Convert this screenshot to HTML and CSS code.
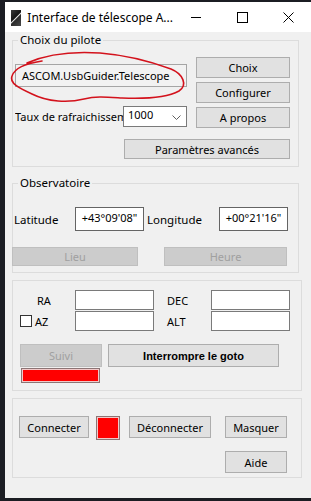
FILE: index.html
```html
<!DOCTYPE html>
<html lang="fr">
<head>
    <meta charset="UTF-8">
    <title>Interface de télescope ASCOM</title>
    <link rel="stylesheet" href="styles.css">
</head>
<body>
    <div class="window">
        <div class="titlebar">
            <span class="app-icon"></span>
            <span class="title">Interface de télescope A...</span>
            <div class="caption-btns">
                <span class="caption-btn">
                    <svg width="11" height="11" viewBox="0 0 11 11"><path d="M0 5.5h10" stroke="#000" stroke-width="1"/></svg>
                </span>
                <span class="caption-btn">
                    <svg width="11" height="11" viewBox="0 0 11 11"><rect x="0.5" y="0.5" width="10" height="10" fill="none" stroke="#000" stroke-width="1"/></svg>
                </span>
                <span class="caption-btn">
                    <svg width="11" height="11" viewBox="0 0 11 11"><path d="M0.5 0.5l10 10M10.5 0.5l-10 10" stroke="#000" stroke-width="1"/></svg>
                </span>
            </div>
        </div>

        <div class="client">
            <fieldset class="group group-pilot">
                <legend>Choix du pilote</legend>
                <div class="pilot-grid">
                    <div class="pilot-left">
                        <div class="driver-field">ASCOM.UsbGuider.Telescope</div>
                        <div class="rate-row">
                            <span class="rate-label">Taux de rafraichissement</span>
                            <div class="combo">
                                <span>1000</span>
                                <svg width="9" height="5" viewBox="0 0 9 5"><path d="M0.5 0.5l4 4 4-4" fill="none" stroke="#606060" stroke-width="1"/></svg>
                            </div>
                        </div>
                    </div>
                    <div class="pilot-right">
                        <button class="btn">Choix</button>
                        <button class="btn">Configurer</button>
                        <button class="btn">A propos</button>
                    </div>
                </div>
                <button class="btn btn-advanced">Paramètres avancés</button>
            </fieldset>

            <fieldset class="group group-obs">
                <legend>Observatoire</legend>
                <div class="obs-row">
                    <span class="obs-label obs-label-lat">Latitude</span>
                    <div class="obs-field">+43°09'08"</div>
                    <span class="obs-label obs-label-lon">Longitude</span>
                    <div class="obs-field">+00°21'16"</div>
                </div>
                <div class="obs-btns">
                    <button class="btn btn-disabled btn-lieu">Lieu</button>
                    <button class="btn btn-disabled btn-heure">Heure</button>
                </div>
            </fieldset>

            <div class="group group-coords">
                <div class="coord-grid">
                    <span class="coord-label coord-ra">RA</span>
                    <div class="coord-field"></div>
                    <span class="coord-label coord-right">DEC</span>
                    <div class="coord-field"></div>
                    <span class="coord-label coord-az"><span class="checkbox"></span>AZ</span>
                    <div class="coord-field"></div>
                    <span class="coord-label coord-right">ALT</span>
                    <div class="coord-field"></div>
                </div>
                <div class="goto-row">
                    <button class="btn btn-disabled btn-suivi">Suivi</button>
                    <button class="btn btn-goto">Interrompre le goto</button>
                </div>
                <div class="led led-track"></div>
            </div>

            <div class="group group-conn">
                <div class="conn-row">
                    <button class="btn btn-connect">Connecter</button>
                    <div class="led led-conn"></div>
                    <button class="btn btn-disconnect">Déconnecter</button>
                    <button class="btn btn-hide">Masquer</button>
                </div>
                <button class="btn btn-help">Aide</button>
            </div>
        </div>
    </div>

    <!-- annotation à main levée -->
    <svg class="annotation" width="311" height="501" viewBox="0 0 311 501">
        <path d="M27 63 C45 55 70 51 100 53 C125 55 152 62 171 69 C183 74 188 85 179 91 C168 97 145 99 122 98 C106 97 96 96 84 99 C68 103 48 102 32 94 C19 88 9 83 12 76 C15 68 24 64 42 61"
              fill="none" stroke="#d3121c" stroke-width="1.6" stroke-linecap="round"/>
    </svg>
</body>
</html>
```

FILE: styles.css
```css
body {
    margin: 0;
    padding: 2px 0 3px 5px;
    height: 501px;
    box-sizing: border-box;
    background: #1b1d23;
    font-family: "Noto Sans", sans-serif;
    font-size: 11px;
    color: #000;
    overflow: hidden;
}
.window {
    height: 496px;
    background: #f0f0f0;
    overflow: hidden;
}
.titlebar {
    height: 30px;
    background: #fff;
    display: flex;
    align-items: center;
}
.app-icon {
    width: 15px;
    height: 16px;
    margin-left: 6px;
    margin-top: 1px;
    background: linear-gradient(135deg, #3a3a3a 0%, #141414 45%, #d8d8d8 50%, #2a2a2a 56%, #4a4a4a 100%);
}
.title {
    margin-left: 6px;
    font-size: 12px;
    flex: 1;
    white-space: nowrap;
}
.caption-btns {
    display: flex;
    height: 30px;
}
.caption-btn {
    width: 46px;
    display: flex;
    align-items: center;
    justify-content: center;
}

.client {
    padding: 1px 0 0 7px;
}
.group {
    margin: 0;
    padding: 0;
    border: 1px solid #dcdcdc;
    min-width: 0;
    box-sizing: border-box;
}
.group legend {
    padding: 0 2px;
    margin-left: 5px;
    line-height: 14px;
    font-size: 11.5px;
}

.btn {
    font: inherit;
    padding: 0;
    margin: 0;
    background: #e1e1e1;
    border: 1px solid #adadad;
    color: #000;
    box-sizing: border-box;
    display: block;
}
.btn-disabled {
    background: #cccccc;
    border-color: #bfbfbf;
    color: #a0a0a0;
}

/* Choix du pilote */
.group-pilot {
    width: 287px;
}
.pilot-grid {
    display: flex;
    gap: 9px;
    padding-left: 2px;
}
.pilot-left {
    width: 172px;
    padding-top: 17px;
}
.driver-field {
    height: 23px;
    box-sizing: border-box;
    border: 1px solid #a5a5a5;
    background: #f2f2f2;
    line-height: 21px;
    padding-left: 6px;
    white-space: nowrap;
    overflow: hidden;
}
.rate-row {
    display: flex;
    align-items: center;
    margin-top: 19px;
    height: 21px;
}
.rate-label {
    width: 108px;
    overflow: hidden;
    white-space: nowrap;
}
.combo {
    width: 64px;
    height: 21px;
    box-sizing: border-box;
    border: 1px solid #7a7a7a;
    background: #fff;
    display: flex;
    justify-content: space-between;
    align-items: flex-start;
    padding: 1px 5px 0 4px;
    line-height: 14px;
}
.combo svg {
    margin-top: 7px;
}
.pilot-right {
    width: 94px;
    padding-top: 10px;
    display: flex;
    flex-direction: column;
    gap: 4px;
}
.pilot-right .btn {
    height: 21px;
}
.btn-advanced {
    margin: 11px 0 7px 111px;
    width: 166px;
    height: 20px;
}

/* Observatoire */
.group-obs {
    width: 287px;
    margin-top: 9px;
}
.obs-row {
    display: flex;
    align-items: center;
    margin-top: 17px;
    height: 24px;
}
.obs-label-lat {
    width: 62px;
    padding-left: 1px;
    box-sizing: border-box;
    font-size: 11.5px;
}
.obs-label-lon {
    width: 75px;
    padding-left: 3px;
    box-sizing: border-box;
    font-size: 11.5px;
}
.obs-field {
    width: 69px;
    height: 24px;
    box-sizing: border-box;
    border: 1px solid #646464;
    background: #fff;
    text-align: center;
    line-height: 20px;
}
.obs-btns {
    display: flex;
    margin: 16px 0 6px -1px;
}
.obs-btns .btn {
    height: 19px;
}
.btn-lieu {
    width: 126px;
}
.btn-heure {
    width: 123px;
    margin-left: 26px;
}

/* Coordonnées */
.group-coords {
    width: 290px;
    margin-top: 7px;
}
.coord-grid {
    display: grid;
    grid-template-columns: 62px 79px 57px 79px;
    grid-auto-rows: 20px;
    row-gap: 1px;
    margin-top: 9px;
}
.coord-label {
    display: flex;
    align-items: center;
}
.coord-ra {
    padding-left: 24px;
}
.coord-az {
    padding-left: 7px;
    gap: 3px;
}
.coord-right {
    padding-left: 13px;
}
.checkbox {
    width: 12px;
    height: 12px;
    box-sizing: border-box;
    border: 1px solid #333;
    background: #fff;
}
.coord-field {
    border: 1px solid #7a7a7a;
    background: #fff;
}
.goto-row {
    display: flex;
    margin-top: 13px;
}
.goto-row .btn {
    height: 23px;
}
.btn-suivi {
    width: 82px;
    margin-left: 7px;
}
.btn-goto {
    width: 171px;
    margin-left: 6px;
    font-family: "Liberation Sans", Arial, sans-serif;
    font-weight: bold;
    font-size: 11px;
}
.led {
    background: #ff0000;
    border: 1px solid #8c7474;
    box-shadow: inset 0 0 0 1px #f2c8c8;
    box-sizing: border-box;
}
.led-track {
    width: 79px;
    height: 15px;
    margin: 1px 0 7px 8px;
}

/* Connexion */
.group-conn {
    width: 290px;
    margin-top: 7px;
}
.conn-row {
    display: flex;
    align-items: flex-start;
    margin-top: 17px;
}
.conn-row .btn {
    height: 22px;
}
.btn-connect {
    width: 70px;
    margin-left: 6px;
}
.led-conn {
    width: 24px;
    height: 24px;
    margin-left: 7px;
}
.btn-disconnect {
    width: 82px;
    margin-left: 9px;
}
.btn-hide {
    width: 62px;
    margin-left: 14px;
}
.btn-help {
    width: 62px;
    height: 22px;
    margin: 11px 0 4px 212px;
}

.annotation {
    position: absolute;
    top: 0;
    left: 0;
    pointer-events: none;
}
```
